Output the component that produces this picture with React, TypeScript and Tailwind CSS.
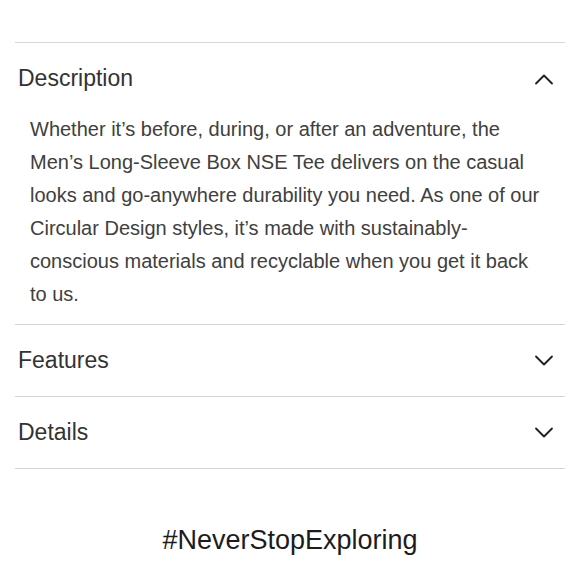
import { useState } from "react";

const sections = [
  {
    title: "Description",
    body: "Whether it’s before, during, or after an adventure, the Men’s Long-Sleeve Box NSE Tee delivers on the casual looks and go-anywhere durability you need. As one of our Circular Design styles, it’s made with sustainably-conscious materials and recyclable when you get it back to us.",
  },
  { title: "Features", body: "" },
  { title: "Details", body: "" },
];

function Chevron({ up }: { up: boolean }) {
  return (
    <svg width="20" height="12" viewBox="0 0 20 12" fill="none" className="shrink-0">
      <path
        d={up ? "M2 10.5 L10 2.5 L18 10.5" : "M2 1.5 L10 9.5 L18 1.5"}
        stroke="#1f1f1f"
        strokeWidth="1.8"
        strokeLinecap="round"
        strokeLinejoin="round"
      />
    </svg>
  );
}

export default function App() {
  const [open, setOpen] = useState<string>("Description");

  return (
    <div className="w-[580px] h-[580px] bg-white px-[15px] pt-[42px] font-['Liberation_Sans',Arial,sans-serif] text-[#2a2a2a]">
      <div className="border-b border-[#d6d6d6]">
        {sections.map((s) => {
          const isOpen = open === s.title;
          return (
            <div key={s.title} className="border-t border-[#d6d6d6]">
              <button
                type="button"
                onClick={() => setOpen(isOpen ? "" : s.title)}
                className="w-full h-[71px] flex items-center justify-between pl-[3px] pr-[11px] text-left"
              >
                <span className="text-[23px] leading-none text-[#333]">{s.title}</span>
                <Chevron up={isOpen} />
              </button>
              {isOpen && s.body && (
                <p className="pl-[15px] pr-[18px] pb-[13px] -mt-[1px] text-[20px] leading-[33px] text-[#404040]">{s.body}</p>
              )}
            </div>
          );
        })}
      </div>
      <div className="pt-[51px] text-center text-[27px] text-[#1c1c1c]">#NeverStopExploring</div>
    </div>
  );
}
